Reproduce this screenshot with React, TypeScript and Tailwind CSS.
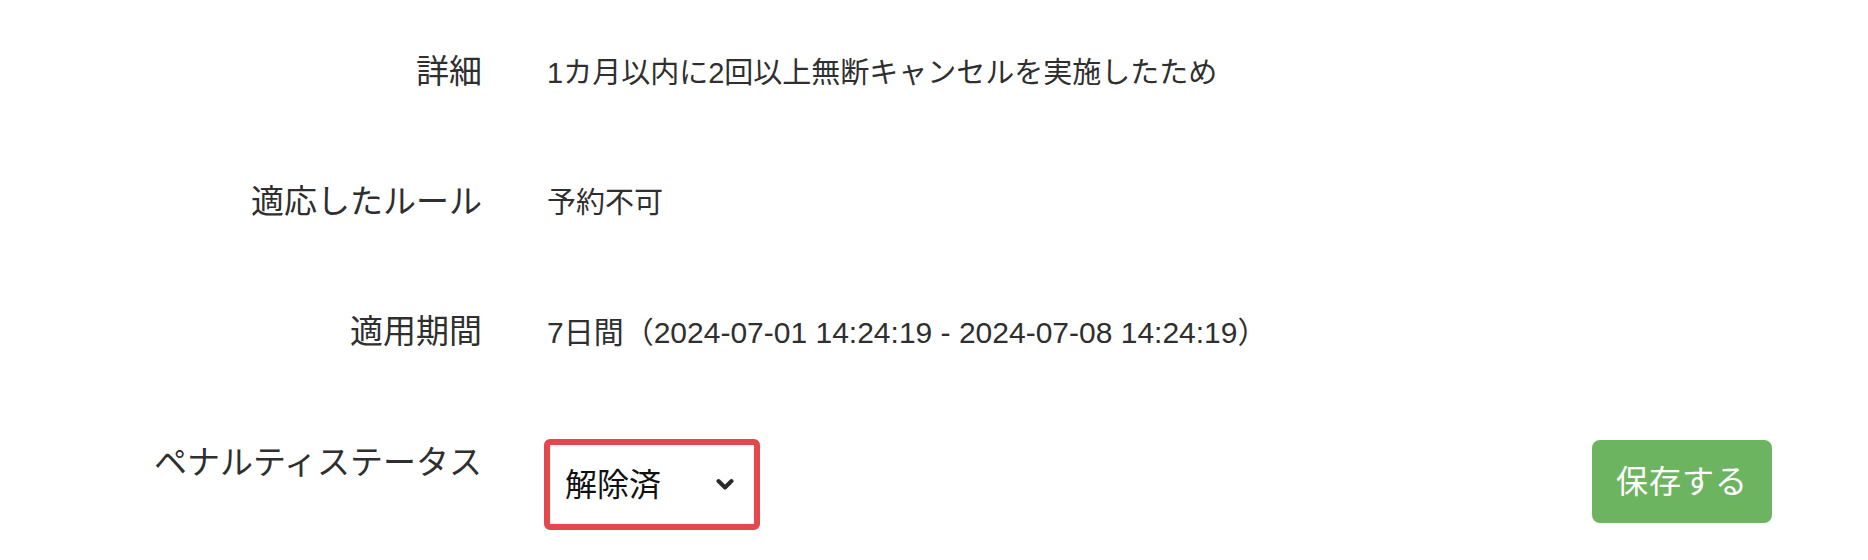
const font = { fontFamily: '"Liberation Sans", "Noto Sans CJK JP", sans-serif' }

interface InfoRowProps {
  label: string
  value: string
  wide?: boolean
}

const InfoRow = ({ label, value, wide }: InfoRowProps) => (
  <div className="flex h-[44px] items-baseline">
    <div className="w-[482px] shrink-0 text-right text-[33px] leading-[44px] text-[#2f2f2f]">
      {label}
    </div>
    <div
      className={
        wide
          ? 'ml-[65px] text-[30px] leading-[44px] text-[#2f2f2f]'
          : 'ml-[65px] text-[29px] leading-[44px] text-[#2f2f2f]'
      }
    >
      {value}
    </div>
  </div>
)

const ChevronDown = () => (
  <svg width="18" height="13" viewBox="0 0 18 13" fill="none">
    <path
      d="M2.5 3 L9 9.5 L15.5 3"
      stroke="#2a2a2a"
      strokeWidth="4"
      strokeLinecap="round"
      strokeLinejoin="round"
    />
  </svg>
)

const App = () => (
  <div className="h-[560px] w-full bg-white pt-[50px]" style={font}>
    <div className="flex flex-col gap-[86px]">
      <InfoRow label="詳細" value="1カ月以内に2回以上無断キャンセルを実施したため" />
      <InfoRow label="適応したルール" value="予約不可" />
      <InfoRow
        label="適用期間"
        value="7日間（2024-07-01 14:24:19 - 2024-07-08 14:24:19）"
        wide
      />

      <div className="flex items-start pr-[96px]">
        <div className="mt-[1px] w-[482px] shrink-0 text-right text-[33px] leading-[44px] text-[#2f2f2f]">
          ペナルティステータス
        </div>
        <div className="ml-[62px] flex h-[91px] w-[216px] -translate-y-[1px] items-center justify-between rounded-[6px] border-[6px] border-[#e2484d] bg-white pr-[20px] pl-[15px] shadow-[inset_0_0_2px_rgba(0,0,0,0.15)]">
          <span className="text-[32px] leading-none text-[#111]">解除済</span>
          <ChevronDown />
        </div>
        <div className="flex-1" />
        <button className="flex h-[83px] w-[180px] items-center justify-center rounded-[8px] bg-[#6db461] text-[32px] tracking-[1px] text-white">
          保存する
        </button>
      </div>
    </div>
  </div>
)

export default App
